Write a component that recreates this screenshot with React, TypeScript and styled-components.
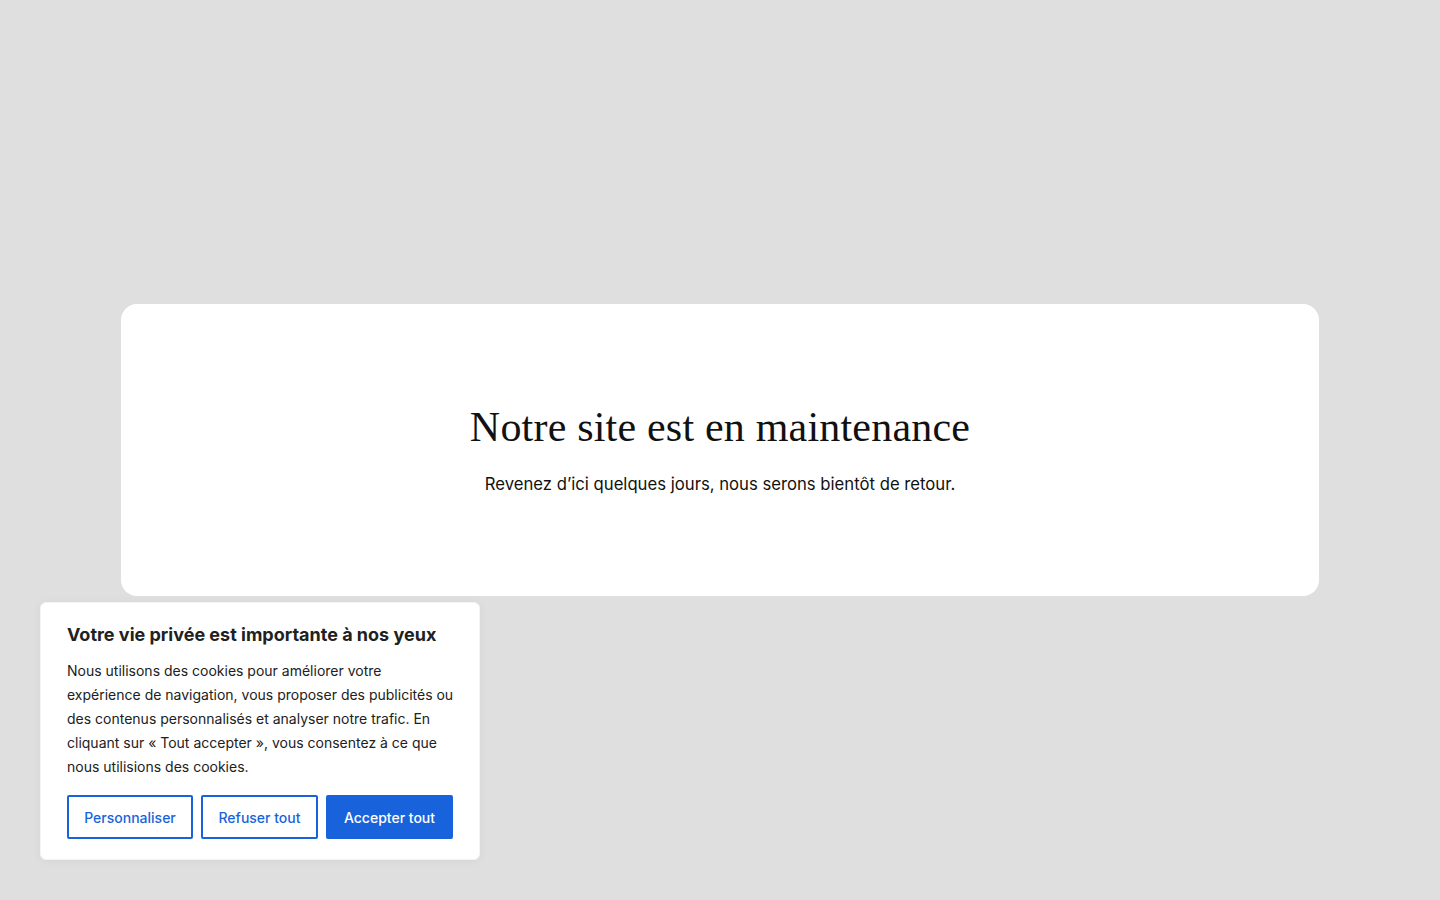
import React from "react";
import styled, { createGlobalStyle } from "styled-components";

const Global = createGlobalStyle`
  html, body { margin: 0; padding: 0; }
  body { background: #dfdfdf; font-family: Inter, "Liberation Sans", sans-serif; }
  * { box-sizing: border-box; }
`;

const Page = styled.div`
  width: 1440px;
  height: 900px;
  padding-top: 304px;
  position: relative;
  display: flex;
  justify-content: center;
  align-items: flex-start;
`;

const Card = styled.main`
  width: 1198px;
  height: 292px;
  background: #ffffff;
  border-radius: 16px;
  display: flex;
  flex-direction: column;
  align-items: center;
  padding-top: 98px;
`;

const Title = styled.h1`
  margin: 0;
  font-family: "Liberation Serif", "DejaVu Serif", serif;
  font-weight: 400;
  font-size: 42px;
  line-height: 50px;
  color: #111;
  letter-spacing: 0.2px;
`;

const Subtitle = styled.p`
  margin: 20px 0 0;
  font-size: 16.7px;
  line-height: 24px;
  color: #111;
`;

const Consent = styled.section`
  position: absolute;
  left: 40px;
  top: 602px;
  width: 440px;
  background: #fff;
  border: 1px solid #f4f4f4;
  border-radius: 6px;
  box-shadow: 0 1px 10px rgba(0, 0, 0, 0.05);
  padding: 20px 20px 20px 26px;
`;

const ConsentTitle = styled.h2`
  margin: 0 0 12px;
  font-size: 18px;
  line-height: 24px;
  font-weight: 700;
  color: #212121;
`;

const ConsentText = styled.p`
  margin: 0;
  font-size: 14px;
  line-height: 24px;
  color: #212121;
`;

const Actions = styled.div`
  display: flex;
  gap: 8px;
  margin-top: 16px;
`;

const Button = styled.button<{ $primary?: boolean; $w: number }>`
  width: ${(p) => p.$w}px;
  height: 44px;
  padding: 0;
  font-family: Inter, "Liberation Sans", sans-serif;
  font-size: 14px;
  font-weight: 500;
  border: 2px solid #1863dc;
  border-radius: 2px;
  background: ${(p) => (p.$primary ? "#1863dc" : "#fff")};
  color: ${(p) => (p.$primary ? "#fff" : "#1863dc")};
  cursor: pointer;
  flex: 0 0 auto;
`;

export default function App() {
  return (
    <>
      <Global />
      <Page>
        <Card>
          <Title>Notre site est en maintenance</Title>
          <Subtitle>Revenez d’ici quelques jours, nous serons bientôt de retour.</Subtitle>
        </Card>
        <Consent>
          <ConsentTitle>Votre vie privée est importante à nos yeux</ConsentTitle>
          <ConsentText>
            Nous utilisons des cookies pour améliorer votre expérience de navigation, vous
            proposer des publicités ou des contenus personnalisés et analyser notre trafic. En
            cliquant sur « Tout accepter », vous consentez à ce que nous utilisions des cookies.
          </ConsentText>
          <Actions>
            <Button $w={126}>Personnaliser</Button>
            <Button $w={117}>Refuser tout</Button>
            <Button $primary $w={127}>Accepter tout</Button>
          </Actions>
        </Consent>
      </Page>
    </>
  );
}
